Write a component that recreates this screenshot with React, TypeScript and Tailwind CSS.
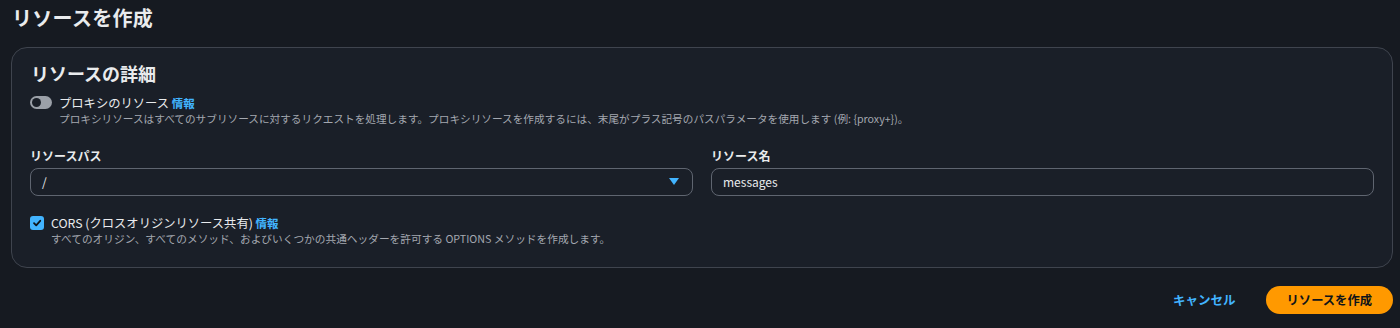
import React from "react";

const font = { fontFamily: '"Noto Sans CJK JP", "Noto Sans", sans-serif' };

export default function App() {
  return (
    <div
      className="w-[1400px] h-[328px] bg-[#161a21] text-[#e9ebed] overflow-hidden"
      style={font}
    >
      <div className="px-[11px] pt-[4px]">
        <h1 className="text-[20px] leading-[28px] font-bold pl-[1px] tracking-[0.3px]">リソースを作成</h1>
        <div className="mt-[15px] w-[1382px] h-[221px] rounded-[16px] border border-[#3f444e] bg-[#1a1f28] px-[18px] pt-[12px]">
          <h2 className="text-[18px] leading-[26px] font-bold pl-[1px]">リソースの詳細</h2>
          <div className="mt-[9px] flex items-start gap-[7px]">
            <div className="mt-[1px] w-[22px] h-[13px] rounded-full bg-[#9ba0a8] flex items-center pl-[2px]">
              <div className="w-[9px] h-[9px] rounded-full bg-[#1a1f28]" />
            </div>
            <div>
              <div className="text-[12.3px] leading-[16px]">
                プロキシのリソース{" "}
                <span className="text-[#42b4ff] font-bold text-[11.5px]">情報</span>
              </div>
              <div className="text-[10.65px] leading-[15px] text-[#a4a8b0]">
                プロキシリソースはすべてのサブリソースに対するリクエストを処理します。プロキシリソースを作成するには、末尾がプラス記号のパスパラメータを使用します (例: {"{proxy+}"})。
              </div>
            </div>
          </div>
          <div className="mt-[21px] grid grid-cols-2 gap-[18px]">
            <div>
              <div className="text-[12px] leading-[18px] font-bold">リソースパス</div>
              <div className="mt-[3px] h-[28px] rounded-[8px] border border-[#5f6570] flex items-center justify-between pl-[11px] pr-[13px]">
                <span className="text-[12px]">/</span>
                <svg width="10" height="8" viewBox="0 0 10 8">
                  <path d="M0 0 H10 L5 7 Z" fill="#42b4ff" />
                </svg>
              </div>
            </div>
            <div>
              <div className="text-[12px] leading-[18px] font-bold">リソース名</div>
              <div className="mt-[3px] h-[28px] rounded-[8px] border border-[#5f6570] flex items-center pl-[11px]">
                <span className="text-[12px]">messages</span>
              </div>
            </div>
          </div>
          <div className="mt-[19px] flex items-start gap-[7px]">
            <div className="mt-[1px] w-[14px] h-[14px] rounded-[3px] bg-[#42b4ff] flex items-center justify-center">
              <svg width="10" height="10" viewBox="0 0 10 10">
                <path d="M2 5.2 L4.2 7.4 L8.2 2.8" stroke="#0f141a" strokeWidth="1.8" fill="none" strokeLinecap="round" strokeLinejoin="round" />
              </svg>
            </div>
            <div>
              <div className="text-[12.3px] leading-[16px]">
                CORS (クロスオリジンリソース共有){" "}
                <span className="text-[#42b4ff] font-bold text-[11.5px]">情報</span>
              </div>
              <div className="text-[10.7px] leading-[15px] text-[#a4a8b0]">
                すべてのオリジン、すべてのメソッド、およびいくつかの共通ヘッダーを許可する OPTIONS メソッドを作成します。
              </div>
            </div>
          </div>
        </div>
        <div className="mt-[18px] flex justify-end items-center gap-[30px] w-[1382px]">
          <span className="text-[12.5px] font-bold text-[#42b4ff]">キャンセル</span>
          <div className="h-[28px] px-[21px] rounded-full bg-[#ff9900] text-[#0f141a] text-[12.3px] font-bold flex items-center">
            リソースを作成
          </div>
        </div>
      </div>
    </div>
  );
}
